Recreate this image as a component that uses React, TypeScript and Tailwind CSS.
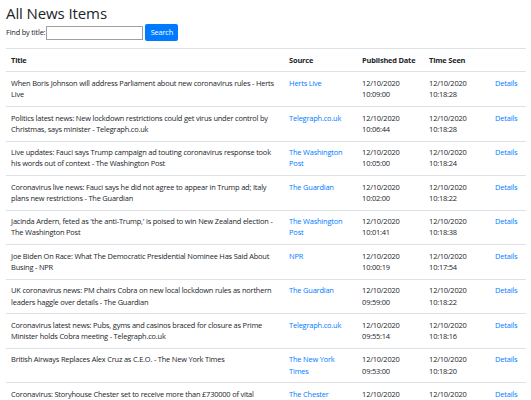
import React from "react";

type Row = { title: string; source: string; pub: string; seen: string };

const rows: Row[] = [
  { title: "When Boris Johnson will address Parliament about new coronavirus rules - Herts Live", source: "Herts Live", pub: "10:09:00", seen: "10:18:28" },
  { title: "Politics latest news: New lockdown restrictions could get virus under control by Christmas, says minister - Telegraph.co.uk", source: "Telegraph.co.uk", pub: "10:06:44", seen: "10:18:28" },
  { title: "Live updates: Fauci says Trump campaign ad touting coronavirus response took his words out of context - The Washington Post", source: "The Washington Post", pub: "10:05:00", seen: "10:18:24" },
  { title: "Coronavirus live news: Fauci says he did not agree to appear in Trump ad; Italy plans new restrictions - The Guardian", source: "The Guardian", pub: "10:02:00", seen: "10:18:22" },
  { title: "Jacinda Ardern, feted as 'the anti-Trump,' is poised to win New Zealand election - The Washington Post", source: "The Washington Post", pub: "10:01:41", seen: "10:18:38" },
  { title: "Joe Biden On Race: What The Democratic Presidential Nominee Has Said About Busing - NPR", source: "NPR", pub: "10:00:19", seen: "10:17:54" },
  { title: "UK coronavirus news: PM chairs Cobra on new local lockdown rules as northern leaders haggle over details - The Guardian", source: "The Guardian", pub: "09:59:00", seen: "10:18:22" },
  { title: "Coronavirus latest news: Pubs, gyms and casinos braced for closure as Prime Minister holds Cobra meeting - Telegraph.co.uk", source: "Telegraph.co.uk", pub: "09:55:14", seen: "10:18:16" },
  { title: "British Airways Replaces Alex Cruz as C.E.O. - The New York Times", source: "The New York Times", pub: "09:53:00", seen: "10:18:20" },
  { title: "Coronavirus: Storyhouse Chester set to receive more than £730000 of vital Government cash - The Chester Standard", source: "The Chester Standard", pub: "09:50:00", seen: "10:18:14" },
];

export default function App() {
  return (
    <div
      className="bg-white text-[#212529] text-[7.45px] leading-[11.18px] tracking-[-0.2px] px-[5.5px] pt-[4px]"
      style={{ fontFamily: '"Open Sans", "Noto Sans", sans-serif' }}
    >
      <h2 className="text-[15px] leading-[18px] tracking-[-0.1px] font-normal mb-[2px] pl-[0.5px]">All News Items</h2>
      <div className="flex items-center mb-[7px] pl-[0.5px]">
        <label>Find by title:</label>
        <input className="w-[97px] h-[14px] border border-[#a0a0a0] ml-[1px] outline-none" />
        <button className="ml-[2px] w-[33px] h-[17px] bg-[#007bff] text-white rounded-[2px] text-[7.45px] leading-[11px]">
          Search
        </button>
      </div>
      <table className="w-[520px] table-fixed border-collapse">
        <colgroup>
          <col className="w-[278px]" />
          <col className="w-[73px]" />
          <col className="w-[67px]" />
          <col className="w-[66px]" />
          <col className="w-[36px]" />
        </colgroup>
        <thead>
          <tr className="border-t border-[#dee2e6] border-b border-b-[#dee2e6]">
            <th className="text-left font-bold p-[5.6px] align-bottom whitespace-nowrap">Title</th>
            <th className="text-left font-bold p-[5.6px] align-bottom whitespace-nowrap">Source</th>
            <th className="text-left font-bold p-[5.6px] align-bottom whitespace-nowrap">Published Date</th>
            <th className="text-left font-bold p-[5.6px] align-bottom whitespace-nowrap">Time Seen</th>
            <th className="p-[5.6px]"></th>
          </tr>
        </thead>
        <tbody>
          {rows.map((r, i) => (
            <tr key={i} className="border-b border-[#dee2e6]">
              <td className="p-[5.6px] align-top h-[34px]">
                <div className="min-h-[22.36px]">{r.title}</div>
              </td>
              <td className="p-[5.6px] align-top">
                <a className="text-[#007bff]">{r.source}</a>
              </td>
              <td className="p-[5.6px] align-top">
                12/10/2020
                <br />
                {r.pub}
              </td>
              <td className="p-[5.6px] align-top">
                12/10/2020
                <br />
                {r.seen}
              </td>
              <td className="p-[5.6px] align-top">
                <a className="text-[#007bff]">Details</a>
              </td>
            </tr>
          ))}
        </tbody>
      </table>
    </div>
  );
}
